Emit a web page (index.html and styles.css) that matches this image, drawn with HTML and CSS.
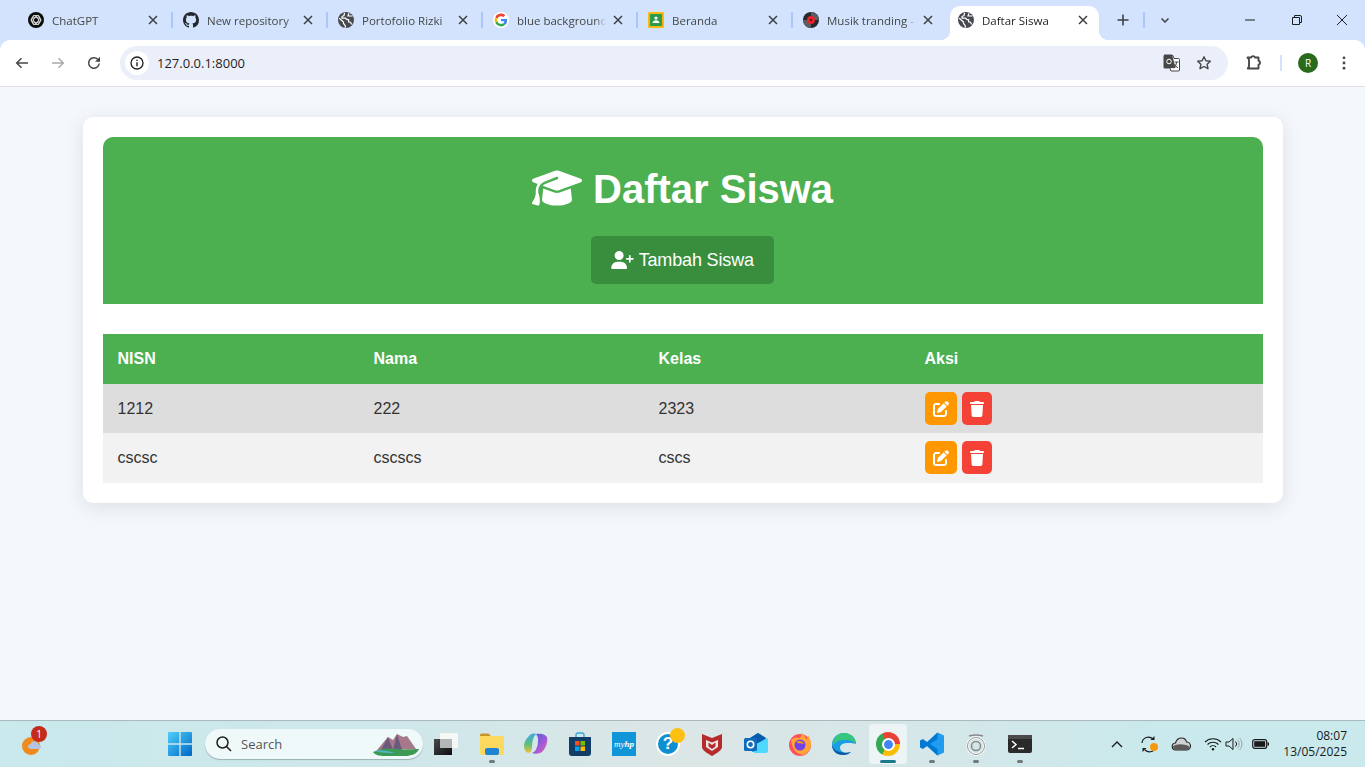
FILE: index.html
```html
<!DOCTYPE html>
<html>
<head>
    <title>Daftar Siswa</title>
    <link rel="stylesheet" href="styles.css">
</head>
<body>
    <svg class="sprites" width="0" height="0">
        <symbol id="globe" viewBox="0 0 16 16">
            <circle cx="8" cy="8" r="8" fill="#474b50"/>
            <path d="M1.2 6.2 5.5 10v1.5l1.8 2.2v2M6.5.8 6 3.5 4 4.5v1.7h3.500L9 7.600h1.600V10h1.600l1.600 2.300M11 1.200 10 4h4.500" fill="none" stroke="#fff" stroke-width="1.2"/>
        </symbol>
        <symbol id="close" viewBox="0 0 16 16">
            <path d="M4 4l8 8M12 4l-8 8" stroke="#3c4043" stroke-width="1.5" fill="none"/>
        </symbol>
        <symbol id="edit" viewBox="0 0 512 512">
            <path fill="currentColor" d="M471.6 21.7c-21.9-21.9-57.3-21.9-79.2 0L362.3 51.7l97.9 97.9 30.1-30.1c21.9-21.9 21.9-57.3 0-79.2L471.6 21.7zm-299.2 220c-6.1 6.1-10.8 13.6-13.5 21.9l-29.6 88.8c-2.9 8.6-.6 18.1 5.8 24.6s15.9 8.7 24.6 5.8l88.8-29.6c8.2-2.7 15.7-7.4 21.9-13.5L437.7 172.3 339.7 74.3 172.4 241.7zM96 64C43 64 0 107 0 160V416c0 53 43 96 96 96H352c53 0 96-43 96-96V320c0-17.7-14.3-32-32-32s-32 14.3-32 32v96c0 17.7-14.3 32-32 32H96c-17.7 0-32-14.3-32-32V160c0-17.7 14.3-32 32-32h96c17.7 0 32-14.3 32-32s-14.3-32-32-32H96z"/>
        </symbol>
        <symbol id="trash" viewBox="0 0 448 512">
            <path fill="currentColor" d="M135.2 17.7L128 32H32C14.3 32 0 46.3 0 64S14.3 96 32 96H416c17.7 0 32-14.3 32-32s-14.3-32-32-32H320l-7.2-14.3C307.4 6.8 296.3 0 284.2 0H163.8c-12.1 0-23.2 6.8-28.6 17.7zM416 128H32L53.2 467c1.6 25.3 22.6 45 47.9 45H346.9c25.3 0 46.3-19.7 47.9-45L416 128z"/>
        </symbol>
    </svg>

    <div class="browser">
        <div class="tabstrip">
            <div class="tab">
                <svg class="favicon" viewBox="0 0 16 16"><circle cx="8" cy="8" r="8" fill="#0d0d0d"/><g fill="none" stroke="#ddd" stroke-width=".9"><circle cx="8" cy="8" r="4.6"/><ellipse cx="8" cy="8" rx="5" ry="2.4"/><ellipse cx="8" cy="8" rx="5" ry="2.4" transform="rotate(60 8 8)"/><ellipse cx="8" cy="8" rx="5" ry="2.4" transform="rotate(120 8 8)"/></g></svg>
                <span class="tab-title">ChatGPT</span>
                <svg class="tab-close"><use href="#close"/></svg>
            </div>
            <div class="tab">
                <svg class="favicon" viewBox="0 0 16 16"><path fill="#24292f" d="M8 0C3.58 0 0 3.58 0 8c0 3.54 2.29 6.53 5.47 7.59.4.07.55-.17.55-.38 0-.19-.01-.82-.01-1.49-2.01.37-2.53-.49-2.69-.94-.09-.23-.48-.94-.82-1.13-.28-.15-.68-.52-.01-.53.63-.01 1.08.58 1.23.82.72 1.21 1.87.87 2.33.66.07-.52.28-.87.51-1.07-1.78-.2-3.64-.89-3.64-3.95 0-.87.31-1.59.82-2.15-.08-.2-.36-1.02.08-2.12 0 0 .67-.21 2.2.82.64-.18 1.32-.27 2-.27.68 0 1.36.09 2 .27 1.53-1.04 2.2-.82 2.2-.82.44 1.1.16 1.92.08 2.12.51.56.82 1.27.82 2.15 0 3.07-1.87 3.75-3.65 3.95.29.25.54.73.54 1.48 0 1.07-.01 1.93-.01 2.2 0 .21.15.46.55.38A8.013 8.013 0 0016 8c0-4.42-3.58-8-8-8z"/></svg>
                <span class="tab-title">New repository</span>
                <svg class="tab-close"><use href="#close"/></svg>
            </div>
            <div class="tab">
                <svg class="favicon"><use href="#globe"/></svg>
                <span class="tab-title">Portofolio Rizki</span>
                <svg class="tab-close"><use href="#close"/></svg>
            </div>
            <div class="tab">
                <svg class="favicon" viewBox="-6 -6 60 60"><circle cx="24" cy="24" r="30" fill="#fff"/><path fill="#EA4335" d="M24 9.5c3.54 0 6.71 1.22 9.21 3.6l6.85-6.85C35.9 2.38 30.47 0 24 0 14.62 0 6.51 5.38 2.56 13.22l7.98 6.19C12.43 13.72 17.74 9.5 24 9.5z"/><path fill="#4285F4" d="M46.98 24.55c0-1.57-.15-3.09-.38-4.55H24v9.02h12.94c-.58 2.96-2.26 5.48-4.78 7.18l7.73 6c4.51-4.18 7.09-10.36 7.09-17.65z"/><path fill="#FBBC05" d="M10.53 28.59c-.48-1.45-.76-2.99-.76-4.59s.27-3.14.76-4.59l-7.98-6.19C.92 16.46 0 20.12 0 24c0 3.88.92 7.54 2.56 10.78l7.97-6.19z"/><path fill="#34A853" d="M24 48c6.48 0 11.93-2.13 15.89-5.81l-7.73-6c-2.15 1.45-4.92 2.3-8.16 2.3-6.26 0-11.57-4.22-13.47-9.91l-7.98 6.19C6.51 42.62 14.62 48 24 48z"/></svg>
                <span class="tab-title">blue background</span>
                <svg class="tab-close"><use href="#close"/></svg>
            </div>
            <div class="tab">
                <svg class="favicon" viewBox="0 0 16 16"><rect y="0" width="16" height="16" rx="1.5" fill="#f9b90a"/><rect x="2" y="2" width="12" height="12" fill="#2e9a4b"/><circle cx="8" cy="6" r="1.6" fill="#fff"/><path d="M4.5 11c.2-2 1.6-2.800 3.500-2.800s3.300.8 3.500 2.800z" fill="#fff"/></svg>
                <span class="tab-title">Beranda</span>
                <svg class="tab-close"><use href="#close"/></svg>
            </div>
            <div class="tab tab-last">
                <svg class="favicon" viewBox="0 0 16 16"><circle cx="8" cy="8" r="8" fill="#26282b"/><path d="M8 0a8 8 0 0 1 8 8H8z" fill="#5a5e63"/><path d="M8 16a8 8 0 0 1-8-8h8z" fill="#5a5e63"/><circle cx="8" cy="8" r="4" fill="#e8222a"/><circle cx="8" cy="8" r="1" fill="#2a1010"/></svg>
                <span class="tab-title">Musik tranding -</span>
                <svg class="tab-close"><use href="#close"/></svg>
            </div>
            <div class="tab tab-active">
                <svg class="favicon"><use href="#globe"/></svg>
                <span class="tab-title">Daftar Siswa</span>
                <svg class="tab-close"><use href="#close"/></svg>
            </div>
            <svg class="strip-icon new-tab" viewBox="0 0 16 16"><path d="M8 2.5v11M2.5 8h11" stroke="#3c4043" stroke-width="1.6" fill="none"/></svg>
            <span class="strip-sep"></span>
            <svg class="strip-icon tab-search" viewBox="0 0 16 16"><path d="M4.5 6.5 8 10l3.5-3.5" stroke="#3c4043" stroke-width="1.5" fill="none"/></svg>
            <div class="window-controls">
                <svg class="win-btn" viewBox="0 0 46 16"><path d="M18 8h10" stroke="#1f1f1f" fill="none"/></svg>
                <svg class="win-btn" viewBox="0 0 46 16"><path d="M19.5 5.500h7v7h-7zM21.500 5.500v-2h5.500a1.500 1.500 0 0 1 1.500 1.500v5.500h-2" stroke="#1f1f1f" fill="none"/></svg>
                <svg class="win-btn" viewBox="0 0 46 16"><path d="M18 3l10 10M28 3 18 13" stroke="#1f1f1f" fill="none"/></svg>
            </div>
        </div>

        <div class="toolbar">
            <svg class="tool-icon tool-first" viewBox="0 0 16 16"><path d="M14 8H3M7.5 3.200 2.700 8l4.800 4.800" stroke="#474747" stroke-width="1.500" fill="none"/></svg>
            <svg class="tool-icon" viewBox="0 0 16 16"><path d="M2 8h11M8.500 3.200 13.300 8l-4.800 4.800" stroke="#a8abaf" stroke-width="1.500" fill="none"/></svg>
            <svg class="tool-icon" viewBox="0 0 16 16"><path d="M13.200 8.500a5.300 5.300 0 1 1-1.500-4.200L13.500 6" stroke="#474747" stroke-width="1.500" fill="none"/><path d="M14 1.800v5h-5z" fill="#474747"/></svg>
            <div class="omnibox">
                <span class="site-info"><svg width="16" height="16" viewBox="0 0 16 16"><circle cx="8" cy="8" r="6" stroke="#1f1f1f" stroke-width="1.300" fill="none"/><path d="M8 7.200v4M8 4.700v1.400" stroke="#1f1f1f" stroke-width="1.400"/></svg></span>
                <span class="url">127.0.0.1:8000</span>
                <svg class="omni-icon omni-translate" viewBox="0 0 18 18"><path d="M1 1.500h9l1 3h4.500a1 1 0 0 1 1 1V16a1 1 0 0 1-1 1H8l-1-3H1.500a.5.5 0 0 1-.5-.5z" fill="#fff" stroke="#474747"/><path d="M1 1a.5.5 0 0 1 .5-.5H9L12.500 14H1.500a.5.5 0 0 1-.5-.5z" fill="#474747"/><circle cx="6" cy="7.500" r="2.300" stroke="#fff" fill="none"/><path d="M11.500 8h4M13.500 8c0 3-1.500 5-3 6M11.500 10c.7 1.500 2 3 3.500 4" stroke="#474747" fill="none"/></svg>
                <svg class="omni-icon omni-star" viewBox="0 0 16 16"><path d="M8 1.800l1.900 4 4.400.5-3.200 3 .9 4.400L8 11.500l-4 2.200.9-4.400-3.200-3 4.400-.5z" stroke="#474747" stroke-width="1.400" fill="none" stroke-linejoin="round"/></svg>
            </div>
            <svg class="tool-icon tool-ext" viewBox="0 0 16 16"><path d="M1.500 2.500h3.700a2 2 0 0 1 3.800 0h3.500v3.300a2 2 0 0 1 0 3.900v3.800H1.800l1.200-2v-7z" stroke="#474747" stroke-width="1.900" fill="none" stroke-linejoin="round"/></svg>
            <span class="tool-sep"></span>
            <span class="avatar">R</span>
            <svg class="tool-icon tool-menu" viewBox="0 0 16 16"><circle cx="8" cy="2.800" r="1.400" fill="#474747"/><circle cx="8" cy="8" r="1.400" fill="#474747"/><circle cx="8" cy="13.200" r="1.400" fill="#474747"/></svg>
        </div>
    </div>

    <main class="content">
        <div class="container">
            <div class="header">
                <h1 class="title">
                    <svg class="title-icon" viewBox="0 0 640 512"><path fill="currentColor" d="M320 32c-8.1 0-16.1 1.4-23.7 4.1L15.8 137.4C6.3 140.9 0 149.9 0 160s6.3 19.1 15.8 22.6l57.9 20.9C57.3 229.3 48 259.8 48 291.9v28.1c0 28.4-10.8 57.7-22.3 80.8c-6.5 13-13.9 25.8-22.5 37.6C0 442.7-.9 448.3 .9 453.4s6 8.9 11.2 10.2l64 16c4.2 1.1 8.7 .3 12.4-2s6.3-6.1 7.1-10.4c8.6-42.8 4.3-81.2-2.1-108.7C90.3 344.3 86 329.8 80 316.5V291.9c0-30.2 10.2-58.7 27.9-81.5c12.9-15.5 29.6-28 49.2-35.7l157-61.7c8.2-3.2 17.5 .8 20.7 9s-.8 17.5-9 20.7l-157 61.7c-12.4 4.9-23.3 12.4-32.2 21.6l159.6 57.6c7.6 2.7 15.6 4.1 23.7 4.1s16.1-1.4 23.7-4.1L624.2 182.6c9.5-3.4 15.8-12.5 15.8-22.6s-6.3-19.1-15.8-22.6L343.7 36.1C336.1 33.4 328.1 32 320 32zM128 408c0 35.3 86 72 192 72s192-36.7 192-72L496.7 262.6 354.5 314c-11.1 4-22.8 6-34.5 6s-23.5-2-34.5-6L143.3 262.6 128 408z"/></svg>
                    Daftar Siswa
                </h1>
                <a class="btn-add" href="#">
                    <svg class="add-icon" viewBox="0 0 640 512"><path fill="currentColor" d="M96 128a128 128 0 1 1 256 0A128 128 0 1 1 96 128zM0 482.3C0 383.8 79.8 304 178.3 304h91.4C368.2 304 448 383.8 448 482.3c0 16.4-13.3 29.7-29.7 29.7H29.7C13.3 512 0 498.7 0 482.3zM504 312V248H440c-13.3 0-24-10.7-24-24s10.7-24 24-24h64V136c0-13.3 10.7-24 24-24s24 10.7 24 24v64h64c13.3 0 24 10.7 24 24s-10.7 24-24 24H552v64c0 13.3-10.7 24-24 24s-24-10.7-24-24z"/></svg>
                    Tambah Siswa
                </a>
            </div>

            <table class="students">
                <colgroup>
                    <col class="col-nisn"><col class="col-nama"><col class="col-kelas"><col>
                </colgroup>
                <thead>
                    <tr><th>NISN</th><th>Nama</th><th>Kelas</th><th>Aksi</th></tr>
                </thead>
                <tbody>
                    <tr class="row-hover">
                        <td>1212</td><td>222</td><td>2323</td>
                        <td class="actions">
                            <a class="btn-edit" href="#"><svg class="action-icon"><use href="#edit"/></svg></a>
                            <a class="btn-delete" href="#"><svg class="action-icon trash"><use href="#trash"/></svg></a>
                        </td>
                    </tr>
                    <tr class="row-even">
                        <td>cscsc</td><td>cscscs</td><td>cscs</td>
                        <td class="actions">
                            <a class="btn-edit" href="#"><svg class="action-icon"><use href="#edit"/></svg></a>
                            <a class="btn-delete" href="#"><svg class="action-icon trash"><use href="#trash"/></svg></a>
                        </td>
                    </tr>
                </tbody>
            </table>
        </div>
    </main>

    <footer class="taskbar">
        <div class="weather">
            <svg width="26" height="26" viewBox="0 0 26 26"><circle cx="10" cy="15" r="9" fill="#f08a1d"/><path d="M10 18c-2 0-3-1.200-3-2.500 0-1.400 1-2.300 2.500-2.300.5-2 2-3 4-3 2.300 0 3.800 1.500 4 3.300 1.500 0 2.700 1 2.700 2.300S19 18 17.500 18z" fill="#b4c5e2"/></svg>
            <span class="weather-badge">1</span>
        </div>
        <svg class="start" width="24" height="24" viewBox="0 0 24 24"><defs><linearGradient id="win" x1="0" y1="0" x2="1" y2="1"><stop offset="0" stop-color="#4fd0fb"/><stop offset="1" stop-color="#0067c5"/></linearGradient></defs><path d="M0 1a1 1 0 0 1 1-1h10.300v11.300H0zM12.700 0H23a1 1 0 0 1 1 1v10.300H12.700zM0 12.700h11.300V24H1a1 1 0 0 1-1-1zM12.700 12.700H24V23a1 1 0 0 1-1 1H12.700z" fill="url(#win)"/></svg>
        <div class="search">
            <svg width="18" height="18" viewBox="0 0 18 18"><circle cx="7.5" cy="7.5" r="5.500" stroke="#1f1f1f" stroke-width="1.500" fill="none"/><path d="M11.500 11.500 16 16" stroke="#1f1f1f" stroke-width="1.600"/></svg>
            <span class="search-text">Search</span>
            <svg class="search-art" width="48" height="24" viewBox="0 0 48 24"><path d="M4 18 15 5l5 3 4-6 6 3 4-1 9 13z" fill="#a5788a"/><path d="M15 5l5 13H8zM24 2l5 16h-9z" fill="#6c5a7c"/><path d="M0 20c8-4 16-4 24-3s16 0 22 0c-2 5-8 7-14 7H12C6 24 2 23 0 20z" fill="#3c9a55"/><path d="M2 19c8-1 14 0 20 2-6 0-14 0-20-2z" fill="#4fb7c9"/></svg>
        </div>

        <div class="apps">
            <div class="app app-first"><svg width="24" height="22" viewBox="0 0 24 22"><defs><linearGradient id="taskview" x1="0" y1="0" x2="1" y2="1"><stop offset="0" stop-color="#4a4a4a"/><stop offset="1" stop-color="#0d0d0d"/></linearGradient></defs><rect x="0" y="6" width="18" height="16" fill="url(#taskview)"/><rect x="6" y="0" width="18" height="15" rx="1" fill="#f6f8f8"/><rect x="6" y="6" width="12" height="9" fill="#b4b7b8"/></svg></div>
            <div class="app app-open"><svg width="24" height="22" viewBox="0 0 24 22"><path d="M0 2a1.500 1.500 0 0 1 1.500-1.500h7L11 3H0z" fill="#c8952a"/><path d="M0 3h24v17a2 2 0 0 1-2 2H2a2 2 0 0 1-2-2z" fill="#fbd95f"/><rect x="5" y="15" width="14" height="7" rx="2" fill="#1c84d0"/></svg></div>
            <div class="app"><svg width="24" height="24" viewBox="0 0 24 24"><defs><linearGradient id="cop-a" x1="0" y1="0" x2="0" y2="1"><stop offset="0" stop-color="#3fa7e8"/><stop offset=".55" stop-color="#5bc07a"/><stop offset="1" stop-color="#f2c23e"/></linearGradient><linearGradient id="cop-b" x1="0" y1="0" x2="1" y2="1"><stop offset="0" stop-color="#3d5fd8"/><stop offset=".6" stop-color="#a45ad8"/><stop offset="1" stop-color="#ee5f9a"/></linearGradient></defs><path d="M5 4c1.500-2 4-3 7-2-3 3-4 8-4 13 0 3-1 6-4 6-3-1-4-4-4-7 0-4 2-7 5-10z" fill="url(#cop-a)"/><path d="M12 2c5-1 9 0 11 3 1 5-1 11-5 15-3 2-7 2-10 1 3-1 4-3 5-6 1-2 1-6 1-8 0-2-1-4-2-5z" fill="url(#cop-b)"/></svg></div>
            <div class="app"><svg width="24" height="24" viewBox="0 0 24 24"><path d="M8 5V3a2 2 0 0 1 2-2h4a2 2 0 0 1 2 2v2" stroke="#36a6dc" stroke-width="1.400" fill="none"/><path d="M1 5h22v16a3 3 0 0 1-3 3H4a3 3 0 0 1-3-3z" fill="#113d68"/><rect x="7" y="9" width="4.500" height="4.500" fill="#f25022"/><rect x="12.500" y="9" width="4.500" height="4.500" fill="#7fba00"/><rect x="7" y="14.500" width="4.500" height="4.500" fill="#00a4ef"/><rect x="12.500" y="14.500" width="4.500" height="4.500" fill="#ffb900"/></svg></div>
            <div class="app"><span class="myhp">my<b>hp</b></span></div>
            <div class="app"><span class="help">?</span><span class="help-dot"></span></div>
            <div class="app"><svg width="22" height="24" viewBox="0 0 22 24"><path d="M1 2 11 6l10-4v13c0 3-5 6-10 9-5-3-10-6-10-9z" fill="#b62c2c"/><path d="M5 8l6 2.500L17 8v7l-6 4-6-4z" fill="#e9e5e2"/><path d="M7.500 10.500 11 13l3.500-2.500v4L11 17l-3.500-2.500z" fill="#b62c2c"/></svg></div>
            <div class="app"><svg width="24" height="24" viewBox="0 0 24 24"><path d="M6 6 14 1l8 5v8l-8 6H8z" fill="#28a8ea"/><path d="M14 1l8 5-8 6-8-6z" fill="#0a5cab"/><path d="M12 12l12-6v13a2 2 0 0 1-2 2H10z" fill="#50d9ff"/><rect y="6" width="13" height="13" rx="1.500" fill="#0f6cbd"/><circle cx="6.500" cy="12.500" r="3.200" stroke="#fff" stroke-width="1.600" fill="none"/></svg></div>
            <div class="app"><svg width="24" height="24" viewBox="0 0 24 24"><circle cx="12" cy="13" r="11" fill="#ff4f5e"/><path d="M3 8c1 10 6 14 12 15 5-2 8-6 8-11 0-4-2-7-3-9 0 3-1 4-2 4-1-3-2-5-5-6 1 3 0 4-2 5-2-1-5-1-8 2z" fill="#ffa436"/><circle cx="12" cy="13" r="5.500" fill="#7542e5"/><path d="M8 10c3-2 7-1 8 2-3-1-5 0-8-2z" fill="#ff980e"/></svg></div>
            <div class="app"><svg width="24" height="24" viewBox="0 0 24 24"><path d="M12 1C5 1 0 6 0 13c0 6 5 10 11 10 3 0 6-1 8-3-4 2-10 1-11-4 0-4 4-5 8-5 4 0 8 1 8 1 0-6-5-11-12-11z" fill="#1b9de2"/><path d="M12 1c7 0 12 5 12 11-3-4-8-4-12-4-5 0-9 2-11 6C1 6 5 1 12 1z" fill="#35c67e"/><path d="M11 23c-6 0-11-4-11-10 1 3 3 6 8 7 3 1 7 1 11 0-2 2-5 3-8 3z" fill="#0c59a4"/></svg></div>
            <div class="app app-active"><span class="chrome"><span class="chrome-core"></span></span></div>
            <div class="app app-open"><svg width="24" height="24" viewBox="0 0 24 24"><path d="M17.500.5 24 3.500v17l-6.500 3L6 13z" fill="#1f9cf0"/><path d="M17.500.5 7 10 3 7 0 8.500v7L3 17l4-3 10.500 9.500V17L10 12l7.500-5z" fill="#0078d4"/></svg></div>
            <div class="app app-open"><svg width="22" height="26" viewBox="0 0 22 26"><path d="M4 5a11 4 0 0 1 14 0" stroke="#888" stroke-width="1.500" fill="none"/><circle cx="11" cy="15" r="8.500" stroke="#fff" stroke-width="2.500" fill="none"/><circle cx="11" cy="15" r="8.500" stroke="#777" stroke-width=".8" fill="none"/><circle cx="11" cy="15" r="4.500" stroke="#888" stroke-width="1.500" fill="none"/></svg></div>
            <div class="app app-open"><svg width="24" height="18" viewBox="0 0 24 18"><rect width="24" height="18" rx="2" fill="#2a2a2a"/><rect width="24" height="4" fill="#4a4a4a"/><path d="M4 6l4 3.500L4 13" stroke="#fff" stroke-width="1.500" fill="none"/><path d="M10 13.500h6" stroke="#fff" stroke-width="1.500"/></svg></div>
        </div>

        <div class="tray">
            <svg class="tray-item" viewBox="0 0 32 16"><path d="M11 11l5-5 5 5" stroke="#1a1a1a" stroke-width="1.300" fill="none"/></svg>
            <svg class="tray-item" viewBox="0 0 32 18"><path d="M9 8a6.500 6.500 0 0 1 11-4M23 10a6.500 6.500 0 0 1-11 5" stroke="#1a1a1a" stroke-width="1.200" fill="none"/><path d="M21.500 1v4h-4zM9.500 17v-4h4z" fill="#1a1a1a"/><circle cx="21" cy="12" r="4" fill="#f59a0e"/></svg>
            <svg class="tray-item" viewBox="0 0 32 16"><path d="M11 14a3.500 3.500 0 0 1-.5-7C11.500 3.500 14 2 16.500 2c2.500 0 4.500 1.500 5 4a4 4 0 0 1 0 8z" fill="#cfd3d4" stroke="#2a2a2a" stroke-width="1.200"/><path d="M8 10.500c3-3 11-3 16.500 0a4 4 0 0 1-3 3.500H11a3.500 3.500 0 0 1-3-3.500z" fill="#5a5a5a"/></svg>
            <svg class="tray-wifi" viewBox="0 0 18 14"><path d="M1 5a11.500 11.500 0 0 1 16 0M3.500 7.500a8 8 0 0 1 11 0M6 10a4.300 4.300 0 0 1 6 0" stroke="#1a1a1a" stroke-width="1.100" fill="none"/><circle cx="9" cy="12.300" r="1.200" fill="#1a1a1a"/></svg>
            <svg class="tray-sound" viewBox="0 0 18 14"><path d="M1 5h3l4-3.500v11L4 9H1z" stroke="#1a1a1a" fill="none"/><path d="M10.500 4.500a3.500 3.500 0 0 1 0 5" stroke="#1a1a1a" fill="none"/><path d="M12.500 2.800a6 6 0 0 1 0 8.400M14.500 1a8.500 8.500 0 0 1 0 12" stroke="#9aa5a7" fill="none"/></svg>
            <svg class="tray-battery" viewBox="0 0 18 12"><rect x=".7" y="1.700" width="14" height="8.600" rx="2" stroke="#1a1a1a" stroke-width="1.200" fill="none"/><rect x="2.200" y="3.200" width="11" height="5.600" fill="#1a1a1a"/><rect x="15.500" y="4.500" width="1.500" height="3" fill="#1a1a1a"/></svg>
            <div class="clock">
                <div>08:07</div>
                <div>13/05/2025</div>
            </div>
        </div>
    </footer>
</body>
</html>
```

FILE: styles.css
```css
* {
    box-sizing: border-box;
}

body {
    font-family: "Liberation Sans", Arial, sans-serif;
    background-color: #f4f7fb;
    margin: 0;
    height: 767px;
    display: flex;
    flex-direction: column;
    overflow: hidden;
}

.sprites {
    display: block;
    height: 0;
}

/* browser chrome */
.browser {
    background-color: #d3e3fd;
}

.tabstrip {
    height: 40px;
    display: flex;
    align-items: flex-end;
    padding-left: 17px;
    font-family: "Open Sans", sans-serif;
    font-size: 11.5px;
    color: #444746;
}

.tab {
    width: 155px;
    height: 34px;
    display: flex;
    align-items: center;
    padding: 0 11px 6px;
    position: relative;
}

.tab::after {
    content: "";
    position: absolute;
    right: -1px;
    top: 6px;
    width: 2px;
    height: 16px;
    background-color: #a8c7fa;
}

.tab-last::after {
    display: none;
}

.favicon {
    width: 16px;
    height: 16px;
    flex: none;
    margin-right: 8px;
}

.tab-title {
    flex: 1;
    white-space: nowrap;
    overflow: hidden;
    -webkit-mask-image: linear-gradient(to right, #000 88%, transparent);
    mask-image: linear-gradient(to right, #000 88%, transparent);
}

.tab-close {
    width: 16px;
    height: 16px;
    flex: none;
    margin-left: 4px;
}

.tab-active {
    width: 149px;
    margin-left: 3px;
    padding: 0 8px 6px;
    background-color: #ffffff;
    border-radius: 10px 10px 0 0;
    color: #1f1f1f;
}

.tab-active::before,
.tab-active::after {
    content: "";
    position: absolute;
    top: auto;
    bottom: 0;
    width: 10px;
    height: 10px;
}

.tab-active::before {
    left: -10px;
    background: radial-gradient(circle at 0 0, transparent 10px, #ffffff 10.5px);
}

.tab-active::after {
    right: -10px;
    background: radial-gradient(circle at 100% 0, transparent 10px, #ffffff 10.5px);
}

.strip-icon {
    width: 16px;
    height: 16px;
    flex: none;
    margin-bottom: 12px;
}

.new-tab {
    margin-left: 16px;
}

.strip-sep {
    width: 2px;
    height: 16px;
    margin: 0 12px 12px 12px;
    background-color: #a8c7fa;
}

.window-controls {
    margin-left: auto;
    display: flex;
    align-self: stretch;
    align-items: center;
}

.win-btn {
    width: 46px;
    height: 16px;
}

.toolbar {
    height: 47px;
    background-color: #ffffff;
    border-bottom: 1px solid #dfe1e5;
    border-radius: 10px 10px 0 0;
    display: flex;
    align-items: center;
    padding-bottom: 1px;
}

.tool-icon {
    width: 16px;
    height: 16px;
    flex: none;
    margin-right: 20px;
}

.tool-first {
    margin-left: 14px;
}

.omnibox {
    width: 1108px;
    height: 34px;
    margin-left: -2px;
    background-color: #ebeff9;
    border-radius: 17px;
    display: flex;
    align-items: center;
    padding: 0 16px 0 5px;
}

.site-info {
    width: 24px;
    height: 24px;
    background-color: #ffffff;
    border-radius: 50%;
    display: flex;
    align-items: center;
    justify-content: center;
}

.url {
    margin-left: 8px;
    padding-top: 1px;
    flex: 1;
    font-family: "Open Sans", sans-serif;
    font-size: 13px;
    color: #1f1f1f;
}

.omni-icon {
    flex: none;
}

.omni-translate {
    width: 18px;
    height: 18px;
    margin-right: 15px;
}

.omni-star {
    width: 16px;
    height: 16px;
}

.tool-ext {
    margin-left: 18px;
    margin-right: 18px;
}

.tool-sep {
    width: 2px;
    height: 16px;
    background-color: #d3e3fd;
}

.avatar {
    width: 20px;
    height: 20px;
    margin-left: 16px;
    margin-right: 18px;
    border-radius: 50%;
    background-color: #2a6a1c;
    color: #ffffff;
    font-family: "Open Sans", sans-serif;
    font-size: 10px;
    display: flex;
    align-items: center;
    justify-content: center;
}

.tool-menu {
    margin-right: 0;
}

/* page */
.content {
    flex: 1;
    min-height: 0;
}

.container {
    width: 1200px;
    margin: 30px auto 0;
    padding: 20px;
    background-color: #ffffff;
    border-radius: 10px;
    box-shadow: 0 4px 20px rgba(0, 0, 0, 0.1);
}

.header {
    background-color: #4caf50;
    color: #ffffff;
    text-align: center;
    padding: 29px 20px 20px;
    border-radius: 10px 10px 0 0;
}

.title {
    margin: 0 0 24px;
    font-size: 40px;
    line-height: 46px;
    font-weight: bold;
}

.title-icon {
    width: 50px;
    height: 40px;
    vertical-align: -5px;
}

.btn-add {
    display: inline-block;
    height: 48px;
    line-height: 48px;
    padding: 0 20px;
    background-color: #388e3c;
    color: #ffffff;
    font-size: 18px;
    letter-spacing: -0.15px;
    text-decoration: none;
    border-radius: 5px;
}

.add-icon {
    width: 23px;
    height: 18px;
    vertical-align: -3px;
}

.students {
    width: 100%;
    margin-top: 30px;
    border-collapse: collapse;
    table-layout: fixed;
    font-size: 16px;
}

.col-nisn {
    width: 256px;
}

.col-nama {
    width: 285px;
}

.col-kelas {
    width: 266px;
}

.students th {
    height: 50px;
    padding: 0 15px;
    background-color: #4caf50;
    color: #ffffff;
    text-align: left;
}

.students td {
    height: 49px;
    padding: 0 15px;
    color: #333333;
}

.row-hover td {
    background-color: #dddddd;
}

.row-even td {
    background-color: #f2f2f2;
}

.students .row-even td {
    height: 50px;
    padding-bottom: 1px;
}

.actions {
    font-size: 0;
}

.btn-edit,
.btn-delete {
    display: inline-flex;
    align-items: center;
    justify-content: center;
    height: 33px;
    color: #ffffff;
    border-radius: 5px;
    vertical-align: middle;
}

.btn-edit {
    width: 32px;
    background-color: #ff9800;
    margin-right: 5px;
}

.btn-delete {
    width: 30px;
    background-color: #f44336;
}

.action-icon {
    width: 16px;
    height: 16px;
}

.trash {
    width: 14px;
}

/* windows taskbar */
.taskbar {
    height: 47px;
    flex: none;
    display: flex;
    align-items: center;
    border-top: 1px solid #a9b9bc;
    background: linear-gradient(to right, #c9e9ec 0%, #cfe7ea 30%, #dce6e6 50%, #d4e7e9 70%, #c9e9ec 85%);
}

.weather {
    width: 26px;
    height: 26px;
    margin-left: 21px;
    position: relative;
}

.weather-badge {
    position: absolute;
    left: 10px;
    top: -5px;
    width: 16px;
    height: 16px;
    border-radius: 50%;
    background-color: #c42b1c;
    color: #ffffff;
    font-family: "Open Sans", sans-serif;
    font-size: 10px;
    line-height: 16px;
    text-align: center;
}

.start {
    margin-left: 121px;
    flex: none;
}

.search {
    width: 218px;
    height: 30px;
    margin-left: 13px;
    padding: 0 2px 0 10px;
    display: flex;
    align-items: center;
    background-color: #f0f9f9;
    border-radius: 15px;
    box-shadow: 0 1px 1px rgba(0, 0, 0, 0.25);
}

.search-text {
    margin-left: 8px;
    flex: 1;
    font-family: "Open Sans", sans-serif;
    font-size: 13px;
    color: #555555;
}

.apps {
    display: flex;
    margin-left: 1px;
}

.app {
    width: 44px;
    height: 40px;
    display: flex;
    align-items: center;
    justify-content: center;
    position: relative;
}

.app-first {
    margin-right: 2px;
}

.app-open::after,
.app-active::after {
    content: "";
    position: absolute;
    left: 19px;
    bottom: 1px;
    width: 6px;
    height: 3px;
    border-radius: 2px;
    background-color: #6f7a7c;
}

.app-active {
    width: 38px;
    margin: 0 3px;
    border-radius: 4px;
    background-color: #edf4f5;
}

.app-active::after {
    left: 11px;
    width: 16px;
    background-color: #1a7a8c;
}

.myhp {
    width: 24px;
    height: 24px;
    background-color: #0e96d8;
    color: #ffffff;
    font-family: "Liberation Serif", serif;
    font-style: italic;
    font-size: 9px;
    line-height: 24px;
    text-align: center;
}

.help {
    width: 24px;
    height: 24px;
    border-radius: 50%;
    border: 2px solid #ffffff;
    background-color: #0e8fd0;
    color: #ffffff;
    font-weight: bold;
    font-size: 17px;
    line-height: 20px;
    text-align: center;
}

.help-dot {
    position: absolute;
    left: 24px;
    top: 4px;
    width: 15px;
    height: 15px;
    border-radius: 50%;
    background-color: #fdc010;
}

.chrome {
    width: 24px;
    height: 24px;
    border-radius: 50%;
    background: conic-gradient(from -30deg, #ea4335 0 120deg, #fbbc04 120deg 240deg, #34a853 240deg);
    display: flex;
    align-items: center;
    justify-content: center;
}

.chrome-core {
    width: 13px;
    height: 13px;
    border-radius: 50%;
    border: 2px solid #ffffff;
    background-color: #4285f4;
}

.tray {
    margin-left: auto;
    display: flex;
    align-items: center;
    padding-right: 18px;
    color: #1a1a1a;
}

.tray-item {
    width: 32px;
    height: 18px;
    flex: none;
}

.tray-wifi {
    width: 18px;
    height: 14px;
    margin-left: 7px;
}

.tray-sound {
    width: 18px;
    height: 14px;
    margin-left: 3px;
}

.tray-battery {
    width: 18px;
    height: 12px;
    margin-left: 9px;
}

.clock {
    width: 77px;
    text-align: right;
    font-family: "Open Sans", sans-serif;
    font-size: 12px;
    line-height: 16px;
}
```
